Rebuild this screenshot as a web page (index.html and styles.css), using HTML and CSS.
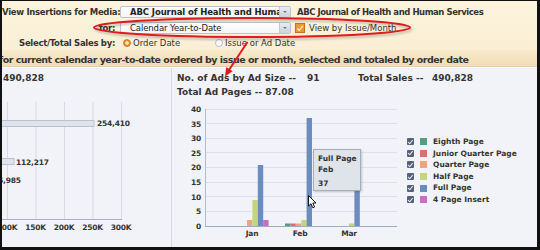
FILE: index.html
```html
<!DOCTYPE html>
<html>
<head>
<meta charset="utf-8">
<title>Insertions</title>
<link rel="stylesheet" href="styles.css">
</head>
<body>
<div class="frame">

	<div class="toolbar">
		<div class="row">
			<label class="lbl">View Insertions for Media:</label>
			<div class="select"><span class="sel_text b">ABC Journal of Health and Human Services</span><span class="sel_btn"></span></div>
			<span class="media_name">ABC Journal of Health and Human Services</span>
		</div>
		<div class="row">
			<label class="lbl">for:</label>
			<div class="select"><span class="sel_text">Calendar Year-to-Date</span><span class="sel_btn"></span></div>
			<span class="check"><svg width="10" height="10" viewBox="0 0 10 10"><rect x="0.5" y="0.5" width="9" height="9" fill="#ec9634" stroke="#c9711b"/><path d="M2.3 5.6 L4.2 7.3 L7.8 2.8" fill="none" stroke="#fff3dc" stroke-width="1.3"/></svg></span>
			<span class="check_text">View by Issue/Month</span>
		</div>
		<div class="row row_radio">
			<label class="lbl">Select/Total Sales by:</label>
			<span class="opt"><span class="radio on"></span>Order Date</span>
			<span class="opt"><span class="radio"></span>Issue or Ad Date</span>
		</div>
	</div>

	<div class="summary"><span class="summary_text">for current calendar year-to-date ordered by issue or month, selected and totaled by order date</span></div>

	<div class="main">
		<div class="left">
			<div class="total">490,828</div>
			<svg class="hbar" width="169" height="161" viewBox="2 86 169 161">
				<g stroke="#d8dbe3" stroke-width="1">
					<line x1="7.5" y1="103" x2="7.5" y2="220"/>
					<line x1="36" y1="103" x2="36" y2="220"/>
					<line x1="64.5" y1="103" x2="64.5" y2="220"/>
					<line x1="93" y1="103" x2="93" y2="220"/>
					<line x1="121.5" y1="103" x2="121.5" y2="220"/>
				</g>
				<line x1="0" y1="220.5" x2="122" y2="220.5" stroke="#a9b3c6"/>
				<rect x="-10" y="121.5" width="104" height="6" fill="#dfe4ec" stroke="#b9c1cf"/>
				<rect x="-10" y="159.5" width="24" height="6" fill="#dfe4ec" stroke="#b9c1cf"/>
				<g class="svg_lbl">
					<text x="97" y="127">254,410</text>
					<text x="16" y="165.5">112,217</text>
					<text x="-2" y="184">6,985</text>
				</g>
				<g class="svg_lbl" text-anchor="middle">
					<text x="7" y="231">100K</text>
					<text x="35.5" y="231">150K</text>
					<text x="64" y="231">200K</text>
					<text x="92.5" y="231">250K</text>
					<text x="121" y="231">300K</text>
				</g>
			</svg>
		</div>

		<div class="center">
			<div class="stats">
				<div class="stat_row">
					<span class="k_ads">No. of Ads by Ad Size --</span>
					<span class="v_ads">91</span>
					<span class="k_sales">Total Sales --</span>
					<span>490,828</span>
				</div>
				<div class="stat_row">Total Ad Pages -- 87.08</div>
			</div>
			<div class="chart_row">
				<svg class="vbar" width="228" height="147" viewBox="172 100 228 147">
					<g stroke="#dde0e7" stroke-width="1">
						<line x1="205" y1="110.5" x2="397" y2="110.5"/>
						<line x1="205" y1="124.5" x2="397" y2="124.5"/>
						<line x1="205" y1="139.5" x2="397" y2="139.5"/>
						<line x1="205" y1="153.5" x2="397" y2="153.5"/>
						<line x1="205" y1="168.5" x2="397" y2="168.5"/>
						<line x1="205" y1="183.5" x2="397" y2="183.5"/>
						<line x1="205" y1="197.5" x2="397" y2="197.5"/>
						<line x1="205" y1="212.5" x2="397" y2="212.5"/>
					</g>
					<line x1="205.5" y1="110" x2="205.5" y2="227.5" stroke="#b3bccd"/>
					<line x1="205" y1="227.5" x2="397" y2="227.5" stroke="#9fabc1"/>
					<g class="svg_lbl" text-anchor="end">
						<text x="201" y="113">40</text>
						<text x="201" y="127.5">35</text>
						<text x="201" y="142">30</text>
						<text x="201" y="156.5">25</text>
						<text x="201" y="171">20</text>
						<text x="201" y="186">15</text>
						<text x="201" y="200.5">10</text>
						<text x="201" y="215">5</text>
						<text x="201" y="230">0</text>
					</g>
					<!-- Jan -->
					<rect x="247" y="221" width="5.4" height="6" fill="#e8a77d"/>
					<rect x="252.4" y="201" width="5.4" height="26" fill="#c4d67b"/>
					<rect x="257.8" y="166" width="5.4" height="61" fill="#6b8cbe"/>
					<rect x="263.2" y="221" width="5.4" height="6" fill="#ca6cbf"/>
					<!-- Feb -->
					<rect x="285" y="224.5" width="5.4" height="2.5" fill="#4f9f80"/>
					<rect x="290.4" y="224.5" width="5.4" height="2.5" fill="#d9706b"/>
					<rect x="295.8" y="224.5" width="5.4" height="2.5" fill="#e8a77d"/>
					<rect x="301.2" y="221" width="5.4" height="6" fill="#c4d67b"/>
					<rect x="306.6" y="119" width="5.4" height="108" fill="#6b8cbe"/>
					<!-- Mar -->
					<rect x="349" y="224.5" width="5.4" height="2.5" fill="#c4d67b"/>
					<rect x="354.4" y="170" width="5.4" height="57" fill="#6b8cbe"/>
					<g class="svg_lbl" text-anchor="middle">
						<text x="252" y="237">Jan</text>
						<text x="300" y="237">Feb</text>
						<text x="349" y="237">Mar</text>
					</g>
				</svg>
				<ul class="legend">
					<li><span class="cb"></span><span class="sw sw_eighth"></span>Eighth Page</li>
					<li><span class="cb"></span><span class="sw sw_junior"></span>Junior Quarter Page</li>
					<li><span class="cb"></span><span class="sw sw_quarter"></span>Quarter Page</li>
					<li><span class="cb"></span><span class="sw sw_half"></span>Half Page</li>
					<li><span class="cb"></span><span class="sw sw_full"></span>Full Page</li>
					<li><span class="cb"></span><span class="sw sw_insert"></span>4 Page Insert</li>
				</ul>
			</div>
		</div>
	</div>

	<div class="tooltip">
		<div>Full Page</div>
		<div>Feb</div>
		<div class="tip_val">37</div>
	</div>

	<svg class="cursor" width="10" height="14" viewBox="0 0 10 14">
		<path d="M0.5 0.5 L0.5 11 L3 8.7 L4.8 12.8 L6.6 12 L4.8 8 L8 8 Z" fill="#fff" stroke="#000" stroke-width="0.9" stroke-linejoin="round"/>
	</svg>

	<svg class="markup" width="540" height="250" viewBox="0 0 540 250">
		<defs>
			<filter id="soft" x="-10%" y="-50%" width="120%" height="200%"><feGaussianBlur stdDeviation="1"/></filter>
		</defs>
		<ellipse cx="253.5" cy="29.5" rx="158" ry="9.5" fill="none" stroke="rgba(0,0,0,0.25)" stroke-width="2" filter="url(#soft)"/>
		<ellipse cx="252" cy="27.5" rx="158" ry="9.5" fill="none" stroke="#e01b1b" stroke-width="2"/>
		<line x1="247.5" y1="42" x2="229" y2="70" stroke="#e01b1b" stroke-width="2"/>
		<polygon points="225,76.5 226.3,67 232.6,71.2" fill="#e01b1b"/>
	</svg>

</div>
</body>
</html>
```

FILE: styles.css
```css
html, body{
margin:0;
padding:0;
}
body{
font-family:"DejaVu Sans", Verdana, sans-serif;
color:#333;
background:#fff;
}

.frame{
position:relative;
width:540px;
height:250px;
box-sizing:border-box;
border-style:solid;
border-color:#111;
border-width:1px 3px 3px 2px;
overflow:hidden;
display:flex;
flex-direction:column;
}

/* top filter panel */
.toolbar{
background:linear-gradient(#fcf4de, #faefd5);
padding:5px 0 2px 0;
font-size:8.5px;
}
.row{
display:flex;
align-items:center;
height:12px;
margin-bottom:4px;
white-space:nowrap;
}
.row_radio{
height:11px;
margin-top:-1px;
margin-bottom:0;
}
.lbl{
flex:none;
width:113px;
text-align:right;
font-weight:bold;
letter-spacing:-0.3px;
color:#333;
}
.b{
font-weight:bold;
}
.select{
flex:none;
display:flex;
margin-left:5px;
width:171px;
height:12px;
box-sizing:border-box;
border:1px solid #bcc3ce;
border-radius:2px;
background:linear-gradient(#fff, #f4f5f7);
overflow:hidden;
}
.sel_text{
flex:1;
min-width:0;
overflow:hidden;
padding-left:9px;
line-height:10px;
color:#222;
letter-spacing:-0.1px;
}
.sel_btn{
flex:none;
position:relative;
width:10px;
border-left:1px solid #c3c9d3;
background:linear-gradient(#e9ecf1, #cdd3dc);
}
.sel_btn::after{
content:"";
position:absolute;
left:3px;
top:4px;
border-left:2px solid transparent;
border-right:2px solid transparent;
border-top:2px solid #6f7a8e;
}
.media_name{
margin-left:6px;
font-weight:bold;
letter-spacing:-0.45px;
color:#333;
}
.check{
margin-left:4px;
width:10px;
height:10px;
display:flex;
}
.check_text{
margin-left:4px;
color:#333;
}
.opt{
display:flex;
align-items:center;
width:92px;
color:#333;
}
.opt:first-of-type{
margin-left:8px;
}
.radio{
width:8px;
height:8px;
box-sizing:border-box;
border-radius:50%;
border:1px solid #b6bdc8;
background:#fff;
margin-right:2px;
}
.radio.on{
border-color:#d07a22;
background:radial-gradient(circle, #fde2b8 0 1.4px, #ef8c2c 2.2px);
}

/* summary line */
.summary{
height:17px;
box-sizing:border-box;
padding-top:3px;
background:linear-gradient(#f7e9cc, #f1ddb6);
border-bottom:1px solid #e3d1aa;
font-size:9.5px;
font-weight:bold;
line-height:13px;
white-space:nowrap;
overflow:hidden;
color:#333;
}
.summary_text{
display:block;
margin-left:-3px;
letter-spacing:-0.5px;
}

/* charts area */
.main{
flex:1;
display:flex;
background:#f2f3f8;
border-top:1px solid #fff;
font-weight:bold;
font-size:9px;
color:#333;
}
.left{
flex:none;
width:169px;
border-right:1px solid #d6dae3;
overflow:hidden;
}
.total{
padding:3px 0 0 1px;
line-height:14px;
}
.hbar, .vbar{
display:block;
}
.svg_lbl{
font-family:"DejaVu Sans", Verdana, sans-serif;
font-weight:bold;
font-size:7.5px;
fill:#333;
letter-spacing:-0.2px;
}
.center{
flex:1;
display:flex;
flex-direction:column;
}
.stats{
padding:3px 0 0 5px;
line-height:14px;
white-space:nowrap;
}
.stat_row{
display:flex;
}
.k_ads{
width:130px;
}
.v_ads{
width:51px;
}
.k_sales{
width:74px;
}
.chart_row{
display:flex;
}
.legend{
list-style:none;
margin:0;
padding:37px 0 0 7px;
font-size:7.5px;
line-height:11.6px;
white-space:nowrap;
}
.legend li{
display:flex;
align-items:center;
}
.cb{
width:7px;
height:7px;
border-radius:1px;
background:#55627a;
position:relative;
margin-right:6px;
}
.cb::after{
content:"";
position:absolute;
left:1.5px;
top:0.5px;
width:2px;
height:3.5px;
border-right:1px solid #e6ebf3;
border-bottom:1px solid #e6ebf3;
transform:rotate(40deg);
}
.sw{
width:7px;
height:7px;
margin-right:6px;
}
.sw_eighth{ background:#4f9f80; }
.sw_junior{ background:#d9706b; }
.sw_quarter{ background:#e8a77d; }
.sw_half{ background:#c4d67b; }
.sw_full{ background:#6b8cbe; }
.sw_insert{ background:#ca6cbf; }

/* overlays */
.tooltip{
position:absolute;
left:311px;
top:148px;
width:48px;
height:42px;
box-sizing:border-box;
padding:3px 0 0 4px;
background:#dfe3ea;
border:1px solid #a4adbb;
box-shadow:1px 1px 2px rgba(0,0,0,0.2);
font-size:7.5px;
font-weight:bold;
line-height:11px;
color:#333;
}
.tip_val{
margin-top:3px;
}
.cursor{
position:absolute;
left:306px;
top:194px;
}
.markup{
position:absolute;
left:-2px;
top:-1px;
pointer-events:none;
}
```
